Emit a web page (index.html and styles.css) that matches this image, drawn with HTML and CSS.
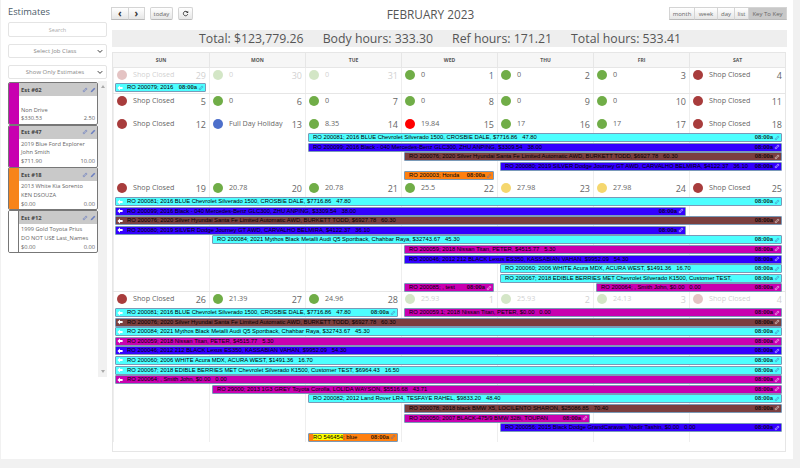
FILE: index.html
```html
<!DOCTYPE html>
<html lang="en">
<head>
<meta charset="utf-8">
<title>Estimates calendar</title>
<link rel="stylesheet" href="styles.css">
</head>
<body>
<svg class="defs" aria-hidden="true">
  <symbol id="link" viewBox="0 0 12 12"><path d="M5 7.2 7.2 5M4.6 5.2 2.6 7.2a1.6 1.6 0 0 0 2.2 2.2l2-2M5.2 4.6l2-2a1.6 1.6 0 0 1 2.2 2.2l-2 2" fill="none" stroke="currentColor" stroke-width="1.5"/></symbol>
  <symbol id="pen" viewBox="0 0 12 12"><path d="M8.4 1.4 10.6 3.6 4.2 10 1.4 10.6 2 7.8Z" fill="currentColor"/></symbol>
  <symbol id="arrow" viewBox="0 0 8 8"><path d="M0.5 4 4 .8V2.8H7.5V5.2H4V7.2Z" fill="#fff"/></symbol>
  <symbol id="chev" viewBox="0 0 8 6"><path d="M1 1.2 4 4.2 7 1.2" fill="none" stroke="#333" stroke-width="1.3"/></symbol>
</svg>
<div class="page">
  <aside class="side">
    <h2 class="side-title">Estimates</h2>
    <input class="field search" type="text" placeholder="Search">
    <div class="field pick first-pick"><span>Select Job Class</span><svg class="chev"><use href="#chev"/></svg></div>
    <div class="field pick"><span>Show Only Estimates</span><svg class="chev"><use href="#chev"/></svg></div>
    <div class="list">
      <div class="cards">
        <article class="card c-mag"><div class="stripe"></div><div class="card-main"><div class="card-head"><b>Est #62</b><span class="tools"><svg><use href="#link"/></svg><svg><use href="#pen"/></svg></span></div><div class="card-body"><p>&nbsp;</p><p>Non Drive</p><p class="money"><span>$330.53</span><span>2.50</span></p></div></div></article>
        <article class="card c-mag"><div class="stripe"></div><div class="card-main"><div class="card-head"><b>Est #47</b><span class="tools"><svg><use href="#link"/></svg><svg><use href="#pen"/></svg></span></div><div class="card-body"><p>2019 Blue Ford Explorer</p><p>John Smith</p><p class="money"><span>$711.90</span><span>10.00</span></p></div></div></article>
        <article class="card c-ora"><div class="stripe"></div><div class="card-main"><div class="card-head"><b>Est #18</b><span class="tools"><svg><use href="#link"/></svg><svg><use href="#pen"/></svg></span></div><div class="card-body"><p>2013 White Kia Sorento</p><p>KEN DSOUZA</p><p class="money"><span>$0.00</span><span>0.00</span></p></div></div></article>
        <article class="card"><div class="stripe"></div><div class="card-main"><div class="card-head"><b>Est #12</b><span class="tools"><svg><use href="#link"/></svg><svg><use href="#pen"/></svg></span></div><div class="card-body"><p>1999 Gold Toyota Prius</p><p>DO NOT USE Last_Names</p><p class="money"><span>$0.00</span><span>0.00</span></p></div></div></article>
      </div>
      <div class="scroll"><i class="up"></i><i class="down"></i></div>
    </div>
  </aside>

  <main class="cal">
    <div class="toolbar">
      <div class="tb-left">
        <div class="btn-group"><button class="btn wide">&#8249;</button><button class="btn wide">&#8250;</button></div>
        <button class="btn today">today</button>
        <button class="btn refresh"><svg viewBox="0 0 10 10"><path d="M8 3.6A3.2 3.2 0 1 0 8.2 6" fill="none" stroke="#333" stroke-width="1.3"/><path d="M8.8 1.2V4.4H5.8Z" fill="#333"/></svg></button>
      </div>
      <h1 class="month-title">FEBRUARY 2023</h1>
      <div class="btn-group views"><button class="btn v1">month</button><button class="btn v2">week</button><button class="btn v3">day</button><button class="btn v4">list</button><button class="btn v5 active">Key To Key</button></div>
    </div>
    <div class="totals"><span>Total: $123,779.26</span><span>Body hours: 333.30</span><span>Ref hours: 171.21</span><span>Total hours: 533.41</span></div>

    <div class="grid">
      <div class="dow"><span>SUN</span><span>MON</span><span>TUE</span><span>WED</span><span>THU</span><span>FRI</span><span>SAT</span></div>

      <section class="week w1">
        <div class="days">
          <div class="day off"><i class="dot red"></i><span>Shop Closed</span><b>29</b></div>
          <div class="day off"><i class="dot green"></i><span>0</span><b>30</b></div>
          <div class="day off"><i class="dot green"></i><span>0</span><b>31</b></div>
          <div class="day"><i class="dot green"></i><span>0</span><b class="blueish">1</b></div>
          <div class="day"><i class="dot green"></i><span>0</span><b>2</b></div>
          <div class="day"><i class="dot green"></i><span>0</span><b>3</b></div>
          <div class="day"><i class="dot red"></i><span>Shop Closed</span><b>4</b></div>
        </div>
        <div class="line"><div class="ev cy first s1 n1"><svg class="ar"><use href="#arrow"/></svg><span class="t">RO 200079; 2016</span><span class="h">08:00a</span><svg class="lk"><use href="#link"/></svg></div></div>
      </section>

      <section class="week w2">
        <div class="days">
          <div class="day"><i class="dot red"></i><span>Shop Closed</span><b>5</b></div>
          <div class="day"><i class="dot green"></i><span>0</span><b>6</b></div>
          <div class="day"><i class="dot green"></i><span>0</span><b>7</b></div>
          <div class="day"><i class="dot green"></i><span>0</span><b>8</b></div>
          <div class="day"><i class="dot green"></i><span>0</span><b>9</b></div>
          <div class="day"><i class="dot green"></i><span>0</span><b>10</b></div>
          <div class="day"><i class="dot red"></i><span>Shop Closed</span><b>11</b></div>
        </div>
      </section>

      <section class="week w3">
        <div class="days">
          <div class="day"><i class="dot red"></i><span>Shop Closed</span><b>12</b></div>
          <div class="day"><i class="dot blue"></i><span>Full Day Holiday</span><b>13</b></div>
          <div class="day"><i class="dot green"></i><span>8.35</span><b>14</b></div>
          <div class="day"><i class="dot hot"></i><span>19.84</span><b>15</b></div>
          <div class="day"><i class="dot green"></i><span>17</span><b>16</b></div>
          <div class="day"><i class="dot green"></i><span>17</span><b>17</b></div>
          <div class="day"><i class="dot red"></i><span>Shop Closed</span><b>18</b></div>
        </div>
        <div class="line"><div class="ev cy s3 n5"><span class="t">RO 200081; 2016 BLUE Chevrolet Silverado 1500, CROSBIE DALE, $7716.86 &nbsp; 47.80</span><span class="h">08:00a</span><svg class="lk"><use href="#link"/></svg></div></div>
        <div class="line"><div class="ev bl s3 n5"><span class="t">RO 200099; 2016 Black - 040 Mercedes-Benz GLC300, ZHU ANPING, $3309.54 &nbsp; 38.00</span><span class="h">08:00a</span><svg class="lk"><use href="#link"/></svg></div></div>
        <div class="line"><div class="ev br s4 n4"><span class="t">RO 200076; 2020 Silver Hyundai Santa Fe Limited Automatic AWD, BURKETT TODD, $6927.78 &nbsp; 60.30</span><span class="h">08:00a</span><svg class="lk"><use href="#link"/></svg></div></div>
        <div class="line"><div class="ev bl s5 n3"><span class="t">RO 200080; 2019 SILVER Dodge Journey GT AWD, CARVALHO BELMIRA, $4122.37 &nbsp; 36.10</span><span class="h">08:00a</span><svg class="lk"><use href="#link"/></svg></div></div>
        <div class="line"><div class="ev or s4 n1"><span class="t">RO 200003; Honda</span><span class="h">08:00a</span><svg class="lk"><use href="#link"/></svg></div></div>
      </section>

      <section class="week w4">
        <div class="days">
          <div class="day"><i class="dot red"></i><span>Shop Closed</span><b>19</b></div>
          <div class="day"><i class="dot green"></i><span>20.78</span><b>20</b></div>
          <div class="day"><i class="dot green"></i><span>20.78</span><b>21</b></div>
          <div class="day"><i class="dot green"></i><span>25.5</span><b>22</b></div>
          <div class="day"><i class="dot yellow"></i><span>27.98</span><b>23</b></div>
          <div class="day"><i class="dot yellow"></i><span>27.98</span><b>24</b></div>
          <div class="day"><i class="dot red"></i><span>Shop Closed</span><b>25</b></div>
        </div>
        <div class="line"><div class="ev cy first s1 n7"><svg class="ar"><use href="#arrow"/></svg><span class="t">RO 200081; 2016 BLUE Chevrolet Silverado 1500, CROSBIE DALE, $7716.86 &nbsp; 47.80</span><span class="h">08:00a</span><svg class="lk"><use href="#link"/></svg></div></div>
        <div class="line"><div class="ev bl first s1 n6"><svg class="ar"><use href="#arrow"/></svg><span class="t">RO 200099; 2016 Black - 040 Mercedes-Benz GLC300, ZHU ANPING, $3309.54 &nbsp; 38.00</span><span class="h">08:00a</span><svg class="lk"><use href="#link"/></svg></div></div>
        <div class="line"><div class="ev br first s1 n7"><svg class="ar"><use href="#arrow"/></svg><span class="t">RO 200076; 2020 Silver Hyundai Santa Fe Limited Automatic AWD, BURKETT TODD, $6927.78 &nbsp; 60.30</span><span class="h">08:00a</span><svg class="lk"><use href="#link"/></svg></div></div>
        <div class="line"><div class="ev bl first s1 n6"><svg class="ar"><use href="#arrow"/></svg><span class="t">RO 200080; 2019 SILVER Dodge Journey GT AWD, CARVALHO BELMIRA, $4122.37 &nbsp; 36.10</span><span class="h">08:00a</span><svg class="lk"><use href="#link"/></svg></div></div>
        <div class="line"><div class="ev cy s2 n6"><span class="t">RO 200084; 2021 Mythos Black Metalli Audi Q5 Sportback, Chahbar Raya, $32743.67 &nbsp; 45.30</span><span class="h">08:00a</span><svg class="lk"><use href="#link"/></svg></div></div>
        <div class="line"><div class="ev mg s4 n4"><span class="t">RO 200059; 2018 Nissan Titan, PETER, $4515.77 &nbsp; 5.30</span><span class="h">08:00a</span><svg class="lk"><use href="#link"/></svg></div></div>
        <div class="line"><div class="ev bl s4 n4"><span class="t">RO 200046; 2012 212 BLACK Lexus ES350, KASSABIAN VAHAN, $9952.09 &nbsp; 54.30</span><span class="h">08:00a</span><svg class="lk"><use href="#link"/></svg></div></div>
        <div class="line"><div class="ev cy s5 n3"><span class="t">RO 200060; 2006 WHITE Acura MDX, ACURA WEST, $1491.36 &nbsp; 16.70</span><span class="h">08:00a</span><svg class="lk"><use href="#link"/></svg></div></div>
        <div class="line"><div class="ev cy s5 n3"><span class="t">RO 200067; 2018 EDIBLE BERRIES MET Chevrolet Silverado K1500, Customer TEST,</span><span class="h">08:00a</span><svg class="lk"><use href="#link"/></svg></div></div>
        <div class="line"><div class="ev mg s4 n1"><span class="t">RO 200085; , test</span><span class="h">08:00a</span><svg class="lk"><use href="#link"/></svg></div><div class="ev mg s6 n2"><span class="t">RO 200064; , Smith John, $0.00 &nbsp; 0.00</span><span class="h">08:00a</span><svg class="lk"><use href="#link"/></svg></div></div>
      </section>

      <section class="week w5">
        <div class="days">
          <div class="day"><i class="dot red"></i><span>Shop Closed</span><b>26</b></div>
          <div class="day"><i class="dot green"></i><span>21.39</span><b>27</b></div>
          <div class="day"><i class="dot green"></i><span>24.96</span><b>28</b></div>
          <div class="day off"><i class="dot green"></i><span>25.93</span><b>1</b></div>
          <div class="day off"><i class="dot green"></i><span>25.93</span><b>2</b></div>
          <div class="day off"><i class="dot green"></i><span>24.13</span><b>3</b></div>
          <div class="day off"><i class="dot red"></i><span>Shop Closed</span><b>4</b></div>
        </div>
        <div class="line"><div class="ev cy first s1 n3"><svg class="ar"><use href="#arrow"/></svg><span class="t">RO 200081; 2016 BLUE Chevrolet Silverado 1500, CROSBIE DALE, $7716.86 &nbsp; 47.80</span><span class="h">08:00a</span><svg class="lk"><use href="#link"/></svg></div><div class="ev mg s4 n4"><span class="t">RO 200059.1; 2018 Nissan Titan, PETER, $0.00 &nbsp; 0.00</span><span class="h">08:00a</span><svg class="lk"><use href="#link"/></svg></div></div>
        <div class="line"><div class="ev br first s1 n7"><svg class="ar"><use href="#arrow"/></svg><span class="t">RO 200076; 2020 Silver Hyundai Santa Fe Limited Automatic AWD, BURKETT TODD, $6927.78 &nbsp; 60.30</span><span class="h">08:00a</span><svg class="lk"><use href="#link"/></svg></div></div>
        <div class="line"><div class="ev cy first s1 n7"><svg class="ar"><use href="#arrow"/></svg><span class="t">RO 200084; 2021 Mythos Black Metalli Audi Q5 Sportback, Chahbar Raya, $32743.67 &nbsp; 45.30</span><span class="h">08:00a</span><svg class="lk"><use href="#link"/></svg></div></div>
        <div class="line"><div class="ev mg first s1 n7"><svg class="ar"><use href="#arrow"/></svg><span class="t">RO 200059; 2018 Nissan Titan, PETER, $4515.77 &nbsp; 5.30</span><span class="h">08:00a</span><svg class="lk"><use href="#link"/></svg></div></div>
        <div class="line"><div class="ev bl first s1 n7"><svg class="ar"><use href="#arrow"/></svg><span class="t">RO 200046; 2012 212 BLACK Lexus ES350, KASSABIAN VAHAN, $9952.09 &nbsp; 54.30</span><span class="h">08:00a</span><svg class="lk"><use href="#link"/></svg></div></div>
        <div class="line"><div class="ev cy first s1 n7"><svg class="ar"><use href="#arrow"/></svg><span class="t">RO 200060; 2006 WHITE Acura MDX, ACURA WEST, $1491.36 &nbsp; 16.70</span><span class="h">08:00a</span><svg class="lk"><use href="#link"/></svg></div></div>
        <div class="line"><div class="ev cy first s1 n7"><svg class="ar"><use href="#arrow"/></svg><span class="t">RO 200067; 2018 EDIBLE BERRIES MET Chevrolet Silverado K1500, Customer TEST, $6964.43 &nbsp; 16.50</span><span class="h">08:00a</span><svg class="lk"><use href="#link"/></svg></div></div>
        <div class="line"><div class="ev mg first s1 n7"><svg class="ar"><use href="#arrow"/></svg><span class="t">RO 200064; , Smith John, $0.00 &nbsp; 0.00</span><span class="h">08:00a</span><svg class="lk"><use href="#link"/></svg></div></div>
        <div class="line"><div class="ev mg s2 n6"><span class="t">RO 29000; 2013 1G3 GREY Toyota Corolla, LOLIDA WAYSON, $5516.68 &nbsp; 43.71</span><span class="h">08:00a</span><svg class="lk"><use href="#link"/></svg></div></div>
        <div class="line"><div class="ev cy s3 n5"><span class="t">RO 200082; 2012 Land Rover LR4, TESFAYE RAHEL, $9833.20 &nbsp; 48.40</span><span class="h">08:00a</span><svg class="lk"><use href="#link"/></svg></div></div>
        <div class="line"><div class="ev br s4 n4"><span class="t">RO 200078; 2018 black BMW X5, LOCILENTO SHARON, $25086.85 &nbsp; 70.40</span><span class="h">08:00a</span><svg class="lk"><use href="#link"/></svg></div></div>
        <div class="line"><div class="ev mg s4 n2"><span class="t">RO 200050; 2007 BLACK-475/9 BMW 328i, TOUPAN</span><span class="h">08:00a</span><svg class="lk"><use href="#link"/></svg></div></div>
        <div class="line"><div class="ev bl s5 n3"><span class="t">RO 200056; 2015 Black Dodge GrandCaravan, Nadir Tashin, $0.00 &nbsp; 0.00</span><span class="h">08:00a</span><svg class="lk"><use href="#link"/></svg></div></div>
        <div class="line"><div class="ev or s3 n1"><span class="t"><mark>RO 546454</mark>; blue</span><span class="h">08:00a</span><svg class="lk"><use href="#link"/></svg></div></div>
      </section>
    </div>
  </main>
</div>
</body>
</html>
```
FILE: styles.css
```css
* { box-sizing: border-box; }
html, body { margin: 0; height: 100%; }
body {
  background: #f1f1f1;
  font-family: "Open Sans", "Liberation Sans", sans-serif;
  color: #555;
  overflow: hidden;
}
.defs { display: none; }
.page {
  display: flex;
  gap: 5px;
  width: 792px;
  height: 459px;
  margin-left: 1px;
  padding: 0 6px 0 7px;
  background: #fff;
}

/* Sidebar */
.side { width: 99px; flex: none; }
.side-title {
  margin: 0;
  height: 22px;
  padding-top: 5px;
  font-size: 9.3px;
  line-height: 13px;
  font-weight: 400;
  color: #4a5a68;
}
.field {
  display: block;
  width: 99px;
  background: #fff;
  border: 1px solid #e4e4e4;
  border-radius: 2px;
  font: 5.5px "Open Sans", sans-serif;
  color: #999;
  text-align: center;
}
.search { height: 15px; padding: 0; outline: 0; }
.search::placeholder { color: #aaa; opacity: 1; }
.pick {
  display: flex;
  align-items: center;
  height: 14px;
  margin-top: 7px;
  padding: 0 3px 0 4px;
  color: #888;
  font-size: 6px;
}
.pick span { flex: 1; }
.chev { width: 6px; height: 5px; flex: none; }
.list { display: flex; height: 296px; margin-top: 2px; }
.cards { width: 90px; flex: none; padding-top: 1px; }
.scroll {
  display: flex;
  flex-direction: column;
  justify-content: space-between;
  align-items: center;
  width: 9px;
  padding: 4px 0;
  background: #f1f1f1;
}
.up, .down { width: 0; height: 0; border: 2.5px solid transparent; }
.up { border-bottom: 3px solid #aaa; border-top: 0; }
.down { border-top: 3px solid #aaa; border-bottom: 0; }
.card {
  display: flex;
  height: 43px;
  margin-bottom: -0.3px;
  border: 1px solid #777;
  border-radius: 2px;
  overflow: hidden;
  background: #fff;
}
.stripe { width: 10px; flex: none; background: #fff; border-right: 1px solid #777; }
.c-mag .stripe { background: #c800b0; border-right: 0; }
.c-ora .stripe { background: #f7841a; border-right: 0; }
.card-main { flex: 1; min-width: 0; }
.card-head {
  display: flex;
  justify-content: space-between;
  align-items: center;
  height: 13px;
  padding: 0 1px 0 2px;
  background: #c9c9c9;
  font-size: 5.8px;
  color: #444;
}
.tools { display: flex; gap: 2px; color: #6c7fc0; }
.tools svg { width: 6px; height: 6px; }
.card-body { padding: 1px 2px 0; font-size: 5.7px; line-height: 8.7px; color: #666; }
.card-body p { margin: 0; white-space: nowrap; }
.money { display: flex; justify-content: space-between; }

/* Toolbar */
.cal { width: 675px; flex: none; }
.toolbar {
  position: relative;
  display: flex;
  justify-content: space-between;
  align-items: center;
  height: 30px;
  padding-bottom: 3px;
}
.tb-left { display: flex; gap: 5px; }
.btn-group { display: flex; }
.btn {
  height: 13px;
  padding: 0;
  border: 1px solid #d4d4d4;
  border-bottom-color: #bbb;
  border-radius: 2px;
  background: linear-gradient(#fff, #e6e6e6);
  font: 6px "Open Sans", sans-serif;
  color: #666;
}
.btn-group .btn { border-radius: 0; margin-left: -1px; }
.wide { width: 17.5px; font-size: 10px; line-height: 9px; font-weight: 700; color: #333; }
.today { width: 23px; }
.refresh { width: 15px; display: flex; align-items: center; justify-content: center; }
.refresh svg { width: 7px; height: 7px; }
.v1 { width: 26px; }
.v2 { width: 24px; }
.v3 { width: 18px; }
.v4 { width: 15px; }
.v5 { width: 39px; }
.btn.active { background: #c8c8c8; color: #666; }
.month-title {
  position: absolute;
  left: 0;
  right: 38px;
  top: 7px;
  margin: 0;
  text-align: center;
  font-size: 11.8px;
  line-height: 15px;
  font-weight: 400;
  color: #555;
  pointer-events: none;
}
.totals {
  display: flex;
  justify-content: center;
  gap: 19px;
  height: 17px;
  margin-bottom: 5px;
  padding-right: 19px;
  background: #eee;
  font-size: 12.3px;
  line-height: 17px;
  color: #555;
}

/* Grid */
.grid {
  width: 674px;
  padding-bottom: 9px;
  border: 1px solid #e6e6e6;
}
.dow, .days, .line { display: grid; grid-template-columns: repeat(7, 1fr); }
.dow {
  height: 15px;
  background: #f6f6f6;
  border-bottom: 1px solid #e6e6e6;
}
.dow span {
  text-align: center;
  font-size: 5px;
  font-weight: 700;
  line-height: 14px;
  color: #555;
  border-left: 1px solid #e6e6e6;
}
.dow span:first-child { border-left: 0; }
.week {
  background-image: linear-gradient(90deg, #eee 1px, transparent 1px);
  background-size: calc(100% / 7) 100%;
  border-bottom: 1px solid #e6e6e6;
}
.w1 { height: 26px; }
.w2 { height: 23px; border-bottom-color: transparent; }
.w3 { height: 64px; border-bottom-color: transparent; }
.w4 { height: 111px; }
.w5 { height: 150px; border-bottom: 0; }
.days { height: 16px; }
.w1 .days { height: 15px; }
.day {
  display: flex;
  align-items: flex-start;
  padding: 2px 3px 0 4px;
  font-size: 7.2px;
  line-height: 9px;
  color: #666;
  min-width: 0;
}
.day span { flex: 1; margin-left: 6px; white-space: nowrap; }
.day b { font-weight: 400; font-size: 9px; line-height: 12px; color: #666; }
.day b.blueish { color: #4a6a8a; }
.off { opacity: .3; }
.dot { width: 10px; height: 10px; flex: none; border-radius: 50%; }
.red { background: #a83c3c; }
.green { background: #70ad47; }
.blue { background: #4d6fcb; }
.hot { background: #f00; }
.yellow { background: #f5d76e; }

/* Events */
.line { height: 9.6px; }
.ev {
  display: flex;
  align-items: center;
  height: 9px;
  margin: 0 3px;
  padding: 0 1px 0 4px;
  border: 1px solid #7a9ab8;
  border-radius: 1px;
  font: 5.85px/7px "Liberation Sans", Arial, sans-serif;
  color: #000;
  min-width: 0;
  overflow: hidden;
  white-space: nowrap;
}
.first { margin-left: 2px; padding-left: 1px; }
.cy { background: #4dffff; }
.bl { background: #3300ff; }
.br { background: #7b3f3f; }
.mg { background: #c800b0; }
.or { background: #ff8010; }
.t { flex: 1; min-width: 0; overflow: hidden; }
.h { flex: none; font-weight: 700; margin-left: 2px; opacity: .8; }
.lk { width: 6px; height: 6px; flex: none; margin-left: 1px; color: #fff; opacity: .75; }
.cy .lk, .or .lk { color: #4a70b0; }
.ar { width: 6px; height: 6px; flex: none; margin-right: 4px; }
mark { background: #ff0; color: #000; }
.s1 { grid-column-start: 1; }
.s2 { grid-column-start: 2; }
.s3 { grid-column-start: 3; }
.s4 { grid-column-start: 4; }
.s5 { grid-column-start: 5; }
.s6 { grid-column-start: 6; }
.n1 { grid-column-end: span 1; }
.n2 { grid-column-end: span 2; }
.n3 { grid-column-end: span 3; }
.n4 { grid-column-end: span 4; }
.n5 { grid-column-end: span 5; }
.n6 { grid-column-end: span 6; }
.n7 { grid-column-end: span 7; }
```
